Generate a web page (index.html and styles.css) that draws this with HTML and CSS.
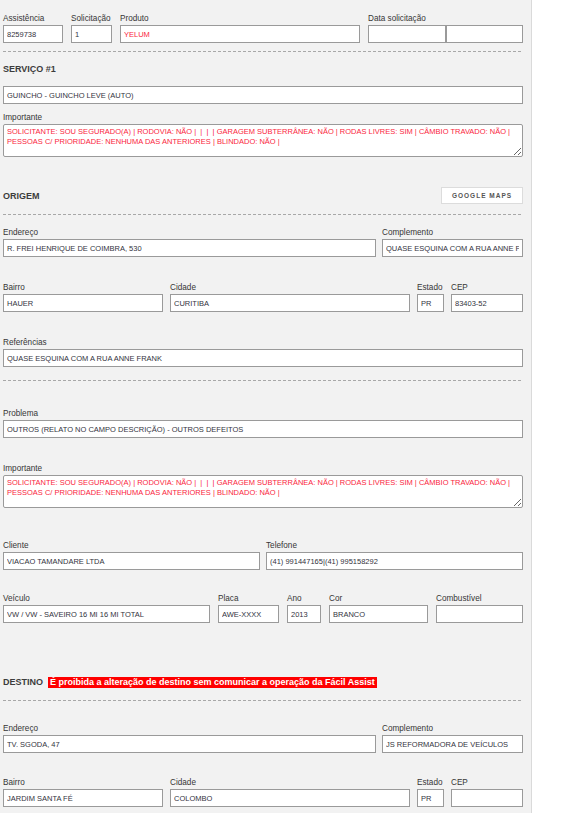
FILE: index.html
```html
<!DOCTYPE html>
<html lang="pt-BR">
<head>
<meta charset="utf-8">
<title>Assistência</title>
<link rel="stylesheet" href="styles.css">
</head>
<body>
<div class="panel">
  <div class="grid row-top mt-13">
    <div class="field"><label class="lbl">Assistência</label><input class="inp" type="text" value="8259738" readonly></div>
    <div class="field"><label class="lbl">Solicitação</label><input class="inp" type="text" value="1" readonly></div>
    <div class="field"><label class="lbl">Produto</label><input class="inp red" type="text" value="YELUM" readonly></div>
    <div class="field"><label class="lbl">Data solicitação</label>
      <div class="date-pair"><input class="inp" type="text" value="" readonly><input class="inp" type="text" value="" readonly></div>
    </div>
  </div>

  <div class="sep mt-8"></div>

  <h2 class="head mt-11">SERVIÇO #1</h2>
  <input class="inp full mt-11" type="text" value="GUINCHO - GUINCHO LEVE (AUTO)" readonly>

  <div class="field mt-8"><label class="lbl">Importante</label><textarea class="area red" readonly>SOLICITANTE: SOU SEGURADO(A) | RODOVIA: NÃO |  |  |  | GARAGEM SUBTERRÂNEA: NÃO | RODAS LIVRES: SIM | CÂMBIO TRAVADO: NÃO |
PESSOAS C/ PRIORIDADE: NENHUMA DAS ANTERIORES | BLINDADO: NÃO |</textarea></div>

  <div class="head-row mt-30">
    <h2 class="head">ORIGEM</h2>
    <button class="btn" type="button">GOOGLE MAPS</button>
  </div>

  <div class="sep mt-10"></div>

  <div class="grid row-address mt-12">
    <div class="field"><label class="lbl">Endereço</label><input class="inp" type="text" value="R. FREI HENRIQUE DE COIMBRA, 530" readonly></div>
    <div class="field"><label class="lbl">Complemento</label><input class="inp" type="text" value="QUASE ESQUINA COM A RUA ANNE FRANK" readonly></div>
  </div>

  <div class="grid row-bairro mt-25">
    <div class="field"><label class="lbl">Bairro</label><input class="inp" type="text" value="HAUER" readonly></div>
    <div class="field"><label class="lbl">Cidade</label><input class="inp" type="text" value="CURITIBA" readonly></div>
    <div class="field"><label class="lbl">Estado</label><input class="inp" type="text" value="PR" readonly></div>
    <div class="field"><label class="lbl">CEP</label><input class="inp" type="text" value="83403-52" readonly></div>
  </div>

  <div class="field mt-25"><label class="lbl">Referências</label><input class="inp" type="text" value="QUASE ESQUINA COM A RUA ANNE FRANK" readonly></div>

  <div class="sep mt-13"></div>

  <div class="field mt-27"><label class="lbl">Problema</label><input class="inp" type="text" value="OUTROS (RELATO NO CAMPO DESCRIÇÃO) - OUTROS DEFEITOS" readonly></div>

  <div class="field mt-25"><label class="lbl">Importante</label><textarea class="area red" readonly>SOLICITANTE: SOU SEGURADO(A) | RODOVIA: NÃO |  |  |  | GARAGEM SUBTERRÂNEA: NÃO | RODAS LIVRES: SIM | CÂMBIO TRAVADO: NÃO |
PESSOAS C/ PRIORIDADE: NENHUMA DAS ANTERIORES | BLINDADO: NÃO |</textarea></div>

  <div class="grid row-cliente mt-32">
    <div class="field"><label class="lbl">Cliente</label><input class="inp" type="text" value="VIACAO TAMANDARE LTDA" readonly></div>
    <div class="field"><label class="lbl">Telefone</label><input class="inp" type="text" value="(41) 991447165|(41) 995158292" readonly></div>
  </div>

  <div class="grid row-veiculo mt-23">
    <div class="field"><label class="lbl">Veículo</label><input class="inp" type="text" value="VW / VW - SAVEIRO 16 MI 16 MI TOTAL" readonly></div>
    <div class="field"><label class="lbl">Placa</label><input class="inp" type="text" value="AWE-XXXX" readonly></div>
    <div class="field"><label class="lbl">Ano</label><input class="inp" type="text" value="2013" readonly></div>
    <div class="field"><label class="lbl">Cor</label><input class="inp" type="text" value="BRANCO" readonly></div>
    <div class="field"><label class="lbl">Combustível</label><input class="inp" type="text" value="" readonly></div>
  </div>

  <div class="dest-row mt-53">
    <h2 class="head">DESTINO</h2>
    <span class="warn">É proibida a alteração de destino sem comunicar a operação da Fácil Assist</span>
  </div>

  <div class="sep mt-12"></div>

  <div class="grid row-address mt-22">
    <div class="field"><label class="lbl">Endereço</label><input class="inp" type="text" value="TV. SGODA, 47" readonly></div>
    <div class="field"><label class="lbl">Complemento</label><input class="inp" type="text" value="JS REFORMADORA DE VEÍCULOS" readonly></div>
  </div>

  <div class="grid row-bairro mt-24">
    <div class="field"><label class="lbl">Bairro</label><input class="inp" type="text" value="JARDIM SANTA FÉ" readonly></div>
    <div class="field"><label class="lbl">Cidade</label><input class="inp" type="text" value="COLOMBO" readonly></div>
    <div class="field"><label class="lbl">Estado</label><input class="inp" type="text" value="PR" readonly></div>
    <div class="field"><label class="lbl">CEP</label><input class="inp" type="text" value="" readonly></div>
  </div>
</div>
</body>
</html>
```

FILE: styles.css
```css
html, body {
  margin: 0;
  padding: 0;
  background: #ffffff;
}

body {
  font-family: "Liberation Sans", Arial, sans-serif;
  color: #333333;
}

.panel {
  width: 520px;
  min-height: 813px;
  padding: 0 8px 20px 3px;
  background: #f2f2f2;
  border-right: 1px solid #dadada;
  display: flex;
  flex-direction: column;
  box-sizing: content-box;
}

.grid {
  display: grid;
}

.row-top {
  grid-template-columns: 60px 41px 240px 155px;
  column-gap: 8px;
}

.row-address {
  grid-template-columns: 373px 141px;
  column-gap: 6px;
}

.row-bairro {
  grid-template-columns: 160px 240px 27px 72px;
  column-gap: 7px;
}

.row-cliente {
  grid-template-columns: 257px 257px;
  column-gap: 6px;
}

.row-veiculo {
  grid-template-columns: 207px 61px 34px 99px 87px;
  column-gap: 8px;
}

.field {
  display: flex;
  flex-direction: column;
  min-width: 0;
}

.lbl {
  display: block;
  height: 12px;
  font-size: 8.2px;
  line-height: 12px;
  color: #363636;
  white-space: nowrap;
}

.inp {
  display: block;
  width: 100%;
  height: 18px;
  box-sizing: border-box;
  margin: 0;
  padding: 0 3px;
  border: 1px solid #9a9a9a;
  border-radius: 0;
  background: #ffffff;
  font-family: "Liberation Sans", Arial, sans-serif;
  font-size: 7.5px;
  color: #333340;
  outline: none;
}

.inp.full {
  width: 520px;
}

.date-pair {
  display: flex;
}

.date-pair .inp:first-child {
  width: 78px;
}

.date-pair .inp:last-child {
  width: 77px;
}

.red {
  color: #fa1e3c;
}

.area {
  display: block;
  width: 100%;
  height: 33px;
  box-sizing: border-box;
  margin: 0;
  padding: 2px 3px;
  border: 1px solid #9a9a9a;
  border-radius: 2px;
  background: #ffffff;
  font-family: "Liberation Sans", Arial, sans-serif;
  font-size: 7.5px;
  line-height: 9.5px;
  color: #fa1e3c;
  overflow: hidden;
  outline: none;
}

.sep {
  height: 1px;
  width: 520px;
  background: repeating-linear-gradient(90deg, #a8a8a8 0 3px, transparent 3px 5px);
}

.head {
  margin: 0;
  font-size: 9px;
  line-height: 12px;
  font-weight: bold;
  color: #3c3c3c;
}

.head-row {
  display: flex;
  justify-content: space-between;
  align-items: center;
  height: 17px;
}

.btn {
  height: 17px;
  width: 82px;
  box-sizing: border-box;
  margin: 0;
  padding: 0;
  border: 1px solid #dcdcdc;
  background: #ffffff;
  font-family: "Liberation Sans", Arial, sans-serif;
  font-size: 6.5px;
  font-weight: bold;
  letter-spacing: 1px;
  color: #555555;
  cursor: pointer;
}

.dest-row {
  display: flex;
  align-items: center;
  gap: 5px;
  height: 12px;
}

.warn {
  display: inline-block;
  background: #ff0000;
  color: #ffffff;
  font-size: 9px;
  font-weight: bold;
  line-height: 11px;
  padding: 0 2px;
}

/* spacing utilities (kept last so they win over component margins) */
.mt-8 { margin-top: 8px; }
.mt-10 { margin-top: 10px; }
.mt-11 { margin-top: 11px; }
.mt-12 { margin-top: 12px; }
.mt-13 { margin-top: 13px; }
.mt-22 { margin-top: 22px; }
.mt-23 { margin-top: 23px; }
.mt-24 { margin-top: 24px; }
.mt-25 { margin-top: 25px; }
.mt-27 { margin-top: 27px; }
.mt-30 { margin-top: 30px; }
.mt-32 { margin-top: 32px; }
.mt-53 { margin-top: 53px; }
```
